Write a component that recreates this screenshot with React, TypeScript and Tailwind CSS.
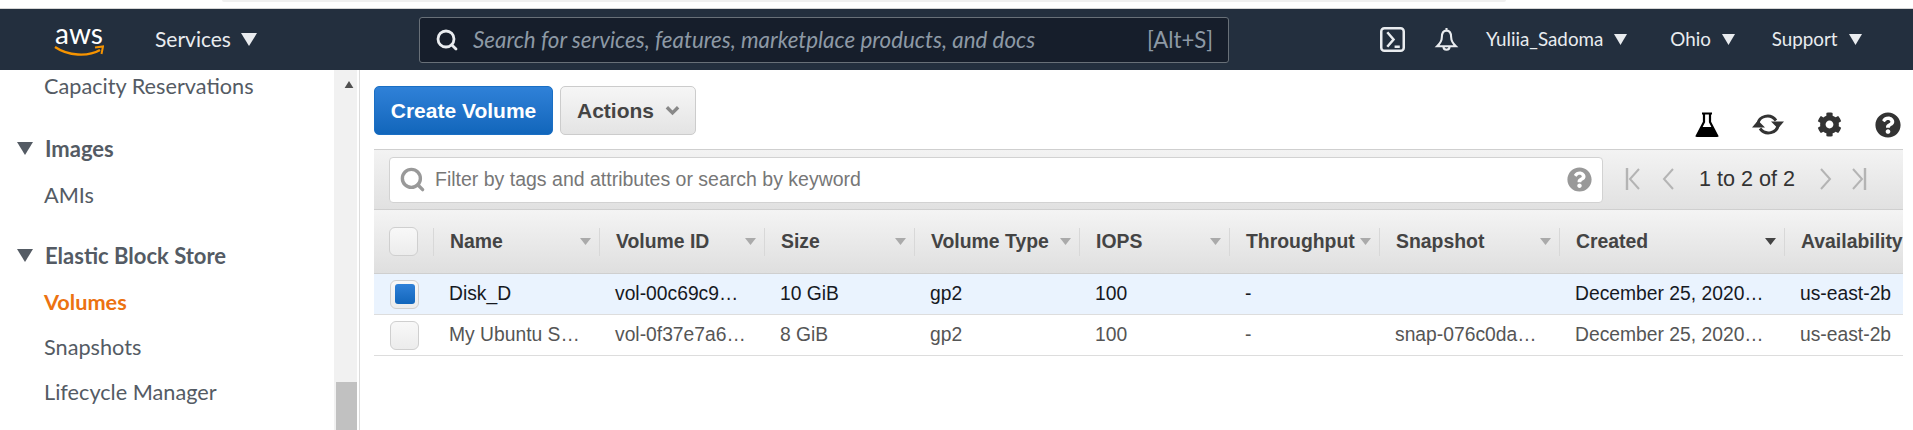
import { Search } from "lucide-react";
import { FaCog, FaQuestionCircle } from "react-icons/fa";

const columns = [
  { label: "Name", width: "w-[166px]" },
  { label: "Volume ID", width: "w-[165px]" },
  { label: "Size", width: "w-[150px]" },
  { label: "Volume Type", width: "w-[165px]" },
  { label: "IOPS", width: "w-[150px]" },
  { label: "Throughput", width: "w-[150px]" },
  { label: "Snapshot", width: "w-[180px]" },
  { label: "Created", width: "w-[225px]", sorted: true },
  { label: "Availability", width: "w-[119px]" },
];

const rows = [
  {
    selected: true,
    cells: ["Disk_D", "vol-00c69c9…", "10 GiB", "gp2", "100", "-", "", "December 25, 2020…", "us-east-2b"],
  },
  {
    selected: false,
    cells: ["My Ubuntu S…", "vol-0f37e7a6…", "8 GiB", "gp2", "100", "-", "snap-076c0da…", "December 25, 2020…", "us-east-2b"],
  },
];

function Tri({ className }: { className: string }) {
  return (
    <svg viewBox="0 0 10 10" preserveAspectRatio="none" className={className}>
      <path d="M0 0H10L5 10Z" fill="currentColor" />
    </svg>
  );
}

function NavMenu({ label, className }: { label: string; className: string }) {
  return (
    <div className={`flex items-center ${className}`}>
      <span className="text-[18.8px]">{label}</span>
      <Tri className="ml-[11px] h-[11px] w-[13px]" />
    </div>
  );
}

function Flask() {
  return (
    <svg viewBox="0 0 24 26" className="h-[26px] w-[24px] text-black">
      <path d="M7 1.5H17M9 2V10L2 23.5H22L15 10V2" fill="none" stroke="currentColor" strokeWidth="2.2" />
      <path d="M6 15H18L23 25H1Z" fill="currentColor" />
    </svg>
  );
}

function Refresh() {
  return (
    <svg viewBox="0 0 32 26" className="h-[27px] w-[32px] text-[#333333]">
      <path d="M6 12C7 5 18 1 24 9" fill="none" stroke="currentColor" strokeWidth="3" />
      <path d="M26 14C25 21 14 25 8 17" fill="none" stroke="currentColor" strokeWidth="3" />
      <path d="M19 10H32L26 17Z" fill="currentColor" />
      <path d="M0 16H13L6 9Z" fill="currentColor" />
    </svg>
  );
}

function Chevron({ dir, bar }: { dir: "left" | "right"; bar?: boolean }) {
  const d = dir === "left" ? "M14 2L5 12L14 22" : "M4 2L13 12L4 22";
  return (
    <svg viewBox="0 0 18 24" className="h-[24px] w-[18px] text-[#b4b4b4]">
      <path d={d} fill="none" stroke="currentColor" strokeWidth="2" />
      {bar && <path d={dir === "left" ? "M2 1V23" : "M16 1V23"} stroke="currentColor" strokeWidth="2.4" />}
    </svg>
  );
}

function Checkbox({ checked }: { checked?: boolean }) {
  return (
    <div className="flex h-[29px] w-[29px] items-center justify-center rounded-[6px] border border-[#cfcfcf] bg-gradient-to-b from-[#f8f8f8] to-[#ececec]">
      {checked && <div className="h-[20px] w-[20px] rounded-[3px] bg-gradient-to-b from-[#2f81d8] to-[#1166bb]" />}
    </div>
  );
}

export default function App() {
  return (
    <div className="flex h-[430px] w-[1913px] flex-col overflow-hidden bg-white font-['Liberation_Sans',sans-serif]">
      <div className="h-[9px] border-b border-[#d5d5d5] pl-[222px]">
        <div className="h-[2px] w-[1284px] rounded-b bg-[#f0f0f0]" />
      </div>

      {/* Top nav */}
      <nav className="flex h-[61px] shrink-0 items-center bg-[#232f3e] font-['Lato',sans-serif] text-[#e9ecef]">
        <div className="ml-[54px] flex w-[50px] flex-col items-center">
          <span className="h-[22px] text-[28px] leading-[20px] text-white">aws</span>
          <svg viewBox="0 0 50 12" className="h-[12px] w-[50px]">
            <path d="M1 2C14 11 34 12 46 5" fill="none" stroke="#f79400" strokeWidth="2.4" />
            <path d="M41 2.5L49 1.5L47.5 9" fill="none" stroke="#f79400" strokeWidth="2" />
          </svg>
        </div>
        <div className="ml-[51px] flex items-center">
          <span className="mb-[2px] text-[21px]">Services</span>
          <Tri className="ml-[10px] h-[13px] w-[16px]" />
        </div>
        <div className="ml-[162px] flex h-[46px] w-[810px] shrink-0 items-center rounded-[3px] border border-[#687078] bg-[#161e2b] text-[#8d99a5]">
          <Search size={24} strokeWidth={2.8} className="ml-[15px] text-[#e9ecef]" />
          <span className="ml-[14px] text-[22.4px] italic">Search for services, features, marketplace products, and docs</span>
          <span className="ml-auto mr-[15px] text-[22.2px]">[Alt+S]</span>
        </div>
        <svg viewBox="0 0 24 24" className="ml-[151px] h-[25px] w-[25px] text-[#e9ecef]">
          <rect x="1.2" y="1.2" width="21.6" height="21.6" rx="3" fill="none" stroke="currentColor" strokeWidth="2.4" />
          <path d="M7 5L13 12L7 19M14 19H19" fill="none" stroke="currentColor" strokeWidth="2.4" />
        </svg>
        <svg viewBox="0 0 24 24" className="ml-[29px] h-[25px] w-[25px]">
          <path
            d="M12 1V3.5M12 3.5C8.5 3.5 7.5 6.5 7.5 10C7.5 14 5 16.5 3 18.5H21C19 16.5 16.5 14 16.5 10C16.5 6.5 15.5 3.5 12 3.5ZM9 18.5C9 23 15 23 15 18.5"
            fill="none"
            stroke="currentColor"
            strokeWidth="2"
          />
        </svg>
        <NavMenu label="Yuliia_Sadoma" className="ml-[27px]" />
        <NavMenu label="Ohio" className="ml-[43px]" />
        <NavMenu label="Support" className="ml-[37px]" />
      </nav>

      <div className="flex min-h-0 flex-1">
        {/* Side nav */}
        <aside className="flex w-[360px] shrink-0 border-r border-[#dcdcdc] pr-[2px]">
          <div className="w-[334px] font-['Lato',sans-serif] text-[21.7px] text-[#545b64]">
            <div className="flex h-[32px] items-center whitespace-nowrap pl-[44px]">Capacity Reservations</div>
            <div className="mt-[24px] flex h-[45px] items-center gap-[12px] pl-[17px] text-[22px] font-bold">
              <Tri className="h-[13px] w-[16px]" />
              Images
            </div>
            <div className="mt-[2px] flex h-[45px] items-center pl-[44px]">AMIs</div>
            <div className="mt-[15px] flex h-[45px] items-center gap-[12px] pl-[17px] text-[22px] font-bold">
              <Tri className="h-[13px] w-[16px]" />
              Elastic Block Store
            </div>
            <div className="mt-[2px] flex h-[45px] items-center pl-[44px] font-bold text-[#ec7211]">Volumes</div>
            <div className="flex h-[45px] items-center pl-[44px]">Snapshots</div>
            <div className="flex h-[45px] items-center pl-[44px]">Lifecycle Manager</div>
          </div>
          <div className="flex w-[23px] flex-col bg-[#f1f1f1] pl-[2px]">
            <svg viewBox="0 0 10 8" className="ml-[8px] mt-[11px] h-[7px] w-[10px] text-[#505050]">
              <path d="M0 8L5 0L10 8Z" fill="currentColor" />
            </svg>
            <div className="mt-auto h-[48px] bg-[#c1c1c1]" />
          </div>
        </aside>

        {/* Main */}
        <main className="min-w-0 flex-1 pl-[14px] pr-[10px]">
          <div className="flex h-[79px] pt-[16px]">
            <button className="h-[49px] w-[179px] rounded-[5px] border border-[#1a6fc4] bg-gradient-to-b from-[#2f81d8] to-[#1166bb] text-[21px] font-bold text-white">
              Create Volume
            </button>
            <button className="ml-[7px] flex h-[49px] w-[136px] items-center rounded-[5px] border border-[#cccccc] bg-gradient-to-b from-[#f6f6f6] to-[#e4e4e4] pl-[16px] text-[21px] font-bold text-[#444444]">
              Actions
              <svg viewBox="0 0 16 10" className="ml-[11px] h-[10px] w-[15px] text-[#888888]">
                <path d="M2 1L8 7L14 1" fill="none" stroke="currentColor" strokeWidth="3.6" />
              </svg>
            </button>
            <div className="ml-auto flex items-center gap-[33px] self-start pr-[2px] pt-[25px] text-[#333333]">
              <Flask />
              <Refresh />
              <FaCog size={25} />
              <FaQuestionCircle size={26} />
            </div>
          </div>

          {/* Filter bar */}
          <div className="flex h-[61px] items-center border-b border-t border-[#cfcfcf] bg-gradient-to-b from-[#f3f3f3] to-[#e1e1e1] pl-[15px]">
            <div className="flex h-[46px] w-[1214px] items-center rounded-[4px] border border-[#d2d2d2] bg-white text-[#888888]">
              <Search size={27} strokeWidth={3} className="ml-[9px] text-[#999999]" />
              <span className="ml-[9px] text-[19.5px] text-[#777777]">Filter by tags and attributes or search by keyword</span>
              <FaQuestionCircle size={25} className="ml-auto mr-[10px] text-[#999999]" />
            </div>
            <div className="ml-[22px] flex items-center">
              <Chevron dir="left" bar />
              <div className="ml-[16px]">
                <Chevron dir="left" />
              </div>
              <span className="ml-[22px] text-[21.6px] text-[#333333]">1 to 2 of 2</span>
              <div className="ml-[22px]">
                <Chevron dir="right" />
              </div>
              <div className="ml-[14px]">
                <Chevron dir="right" bar />
              </div>
            </div>
          </div>

          {/* Table */}
          <div className="overflow-hidden">
            <div className="flex h-[64px] items-center border-b border-[#cfcfcf] bg-gradient-to-b from-[#f4f4f4] to-[#dfdfdf]">
              <div className="flex h-full w-[59px] shrink-0 items-center pl-[15px]">
                <Checkbox />
              </div>
              {columns.map((col) => (
                <div key={col.label} className={`flex h-[28px] shrink-0 items-center border-l border-[#d8d8d8] pl-[16px] pr-[8px] ${col.width}`}>
                  <span className="whitespace-nowrap text-[19.4px] font-bold text-[#444444]">{col.label}</span>
                  {col.label !== "Availability" && (
                    <Tri className={`ml-auto h-[7px] w-[11px] shrink-0 ${col.sorted ? "text-[#444444]" : "text-[#aaaaaa]"}`} />
                  )}
                </div>
              ))}
            </div>
            {rows.map((row) => (
              <div
                key={row.cells[0]}
                className={`flex h-[41px] items-center border-b border-[#dddddd] text-[19.3px] ${row.selected ? "bg-[#eaf3fe] text-[#16191f]" : "text-[#555555]"}`}
              >
                <div className="w-[59px] shrink-0 pl-[16px]">
                  <Checkbox checked={row.selected} />
                </div>
                {row.cells.map((cell, i) => (
                  <div key={i} className={`shrink-0 whitespace-nowrap pl-[16px] pt-[1px] ${columns[i].width}`}>
                    {cell}
                  </div>
                ))}
              </div>
            ))}
          </div>
        </main>
      </div>
    </div>
  );
}
